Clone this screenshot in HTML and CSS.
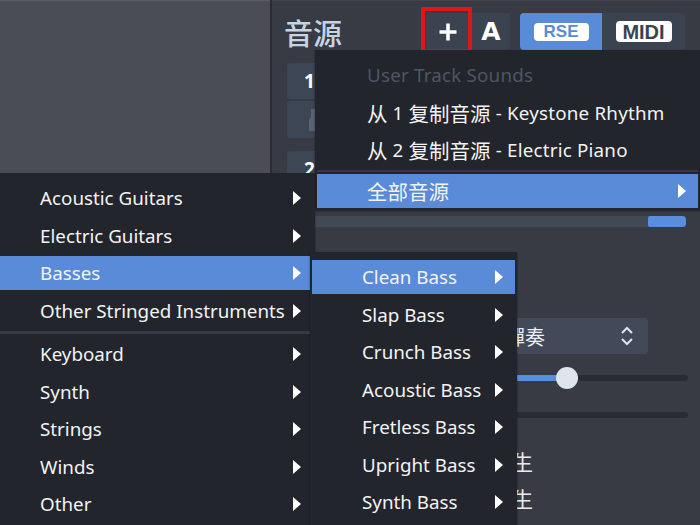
FILE: index.html
```html
<!DOCTYPE html>
<html lang="zh">
<head>
<meta charset="utf-8">
<title>音源</title>
<link rel="stylesheet" href="styles.css">
</head>
<body>
<div class="app">
  <aside class="left-panel"></aside>
  <div class="divider"></div>
  <main class="right-panel">
    <header class="sound-header">
      <h1 class="title">音源</h1>
      <div class="btn-group tools">
        <button class="tool-btn plus-btn" aria-label="add">
          <svg width="20" height="20" viewBox="0 0 20 20"><path d="M10 1.5v17M1.5 10h17" stroke="#fff" stroke-width="3.6" stroke-linecap="butt"/></svg>
        </button>
        <button class="tool-btn a-btn">A</button>
      </div>
      <div class="btn-group modes">
        <button class="mode-btn active"><span class="tag tag-rse">RSE</span></button>
        <button class="mode-btn"><span class="tag tag-midi">MIDI</span></button>
      </div>
    </header>

    <div class="track-card first">
      <div class="card-row"><span class="card-num">1</span></div>
      <div class="card-row lower">
        <svg width="10" height="26" viewBox="0 0 10 26"><path d="M3 2h4v8l2 3v11H1V13l2-3z" fill="#5a6372"/></svg>
      </div>
    </div>
    <div class="track-card second">
      <div class="card-row"><span class="card-num">2</span></div>
    </div>
    <div class="level-bar"><span class="level-fill"></span></div>

    <div class="select-box">
      <span class="select-text">手指彈奏</span>
      <svg class="select-icon" width="14" height="22" viewBox="0 0 14 22"><path d="M2 8l5-5 5 5M2 14l5 5 5-5" fill="none" stroke="#dfe4ea" stroke-width="2"/></svg>
    </div>
    <div class="slider">
      <span class="slider-fill"></span>
      <span class="slider-knob"></span>
    </div>
    <div class="slider plain"></div>
    <div class="text-row">產生</div>
    <div class="text-row second-text">產生</div>
  </main>
</div>

<div class="focus-box"></div>

<div class="menu menu-sounds">
  <div class="menu-item disabled">User Track Sounds</div>
  <div class="menu-item"><span class="cjk">从</span>&nbsp;1&nbsp;<span class="cjk">复制音源</span>&nbsp;- Keystone Rhythm</div>
  <div class="menu-item"><span class="cjk">从</span>&nbsp;2&nbsp;<span class="cjk">复制音源</span>&nbsp;- Electric Piano</div>
  <div class="menu-sep"></div>
  <div class="menu-item active has-sub"><span class="cjk">全部音源</span><i class="arrow"></i></div>
</div>

<div class="menu menu-cats">
  <div class="menu-item has-sub">Acoustic Guitars<i class="arrow"></i></div>
  <div class="menu-item has-sub">Electric Guitars<i class="arrow"></i></div>
  <div class="menu-item has-sub active">Basses<i class="arrow"></i></div>
  <div class="menu-item has-sub">Other Stringed Instruments<i class="arrow"></i></div>
  <div class="menu-sep"></div>
  <div class="menu-item has-sub">Keyboard<i class="arrow"></i></div>
  <div class="menu-item has-sub">Synth<i class="arrow"></i></div>
  <div class="menu-item has-sub">Strings<i class="arrow"></i></div>
  <div class="menu-item has-sub">Winds<i class="arrow"></i></div>
  <div class="menu-item has-sub">Other<i class="arrow"></i></div>
</div>

<div class="menu menu-basses">
  <div class="menu-item has-sub active">Clean Bass<i class="arrow"></i></div>
  <div class="menu-item has-sub">Slap Bass<i class="arrow"></i></div>
  <div class="menu-item has-sub">Crunch Bass<i class="arrow"></i></div>
  <div class="menu-item has-sub">Acoustic Bass<i class="arrow"></i></div>
  <div class="menu-item has-sub">Fretless Bass<i class="arrow"></i></div>
  <div class="menu-item has-sub">Upright Bass<i class="arrow"></i></div>
  <div class="menu-item has-sub">Synth Bass<i class="arrow"></i></div>
</div>
</body>
</html>
```

FILE: styles.css
```css
* { box-sizing: border-box; }

html, body {
  margin: 0;
  padding: 0;
}

body {
  width: 700px;
  height: 525px;
  overflow: hidden;
  position: relative;
  background: #383b43;
  font-family: "Noto Sans", "Noto Sans CJK SC", sans-serif;
  color: #f2f2f2;
}

.app {
  display: grid;
  grid-template-columns: 270px 2px 1fr;
  height: 525px;
}

.left-panel {
  background: #4a4d55;
  border-top: 1px solid #585b63;
}

.divider {
  background: #2a2c31;
}

.right-panel {
  background: #383b43;
  border-top: 1px solid #42454d;
  padding: 0 10px 0 15px;
  display: flex;
  flex-direction: column;
  overflow: hidden;
}

/* header */
.sound-header {
  display: flex;
  align-items: center;
  height: 37px;
  margin-top: 12px;
  margin-right: 5px;
}

.title {
  margin: 0 0 0 -3px;
  padding-top: 2px;
  font-family: "Noto Sans CJK SC", sans-serif;
  font-size: 29px;
  font-weight: 500;
  color: #c6d4e3;
  line-height: 37px;
}

.btn-group {
  display: flex;
  height: 37px;
  border-radius: 4px;
  overflow: hidden;
}

.tools {
  margin-left: auto;
  gap: 2px;
}

.modes {
  margin-left: 10px;
  background: #3b4350;
}

.tool-btn, .mode-btn {
  border: 0;
  margin: 0;
  padding: 0;
  height: 37px;
  display: flex;
  align-items: center;
  justify-content: center;
  background: #3b4350;
  color: #fff;
}

.plus-btn { width: 44px; }

.a-btn {
  width: 38px;
  font-family: "DejaVu Sans", sans-serif;
  font-weight: bold;
  font-size: 25px;
}

.mode-btn { width: 82px; }
.mode-btn + .mode-btn { width: 83px; }
.mode-btn.active { background: #5a8bd8; }

.tag {
  background: #fff;
  border-radius: 4px;
  font-family: "Liberation Sans", sans-serif;
  font-weight: bold;
  display: flex;
  align-items: center;
  justify-content: center;
  line-height: 1;
}

.tag-rse {
  width: 55px;
  height: 18px;
  color: #5a8bd8;
  font-size: 17px;
}

.tag-midi {
  width: 56px;
  height: 21px;
  color: #3b4350;
  font-size: 20px;
}

/* track cards */
.track-card {
  display: flex;
  flex-direction: column;
  gap: 2px;
}

.track-card.first { margin-top: 13px; }
.track-card.second { margin-top: 13px; height: 60px; }

.card-row {
  height: 36px;
  background: #3d4655;
  border-radius: 3px;
  display: flex;
  align-items: center;
  padding-left: 17px;
}

.card-row.lower {
  height: 37px;
  padding-left: 21px;
}

.card-num {
  font-weight: bold;
  font-size: 19px;
  color: #fff;
}

.level-bar {
  margin-top: 5px;
  margin-right: 4px;
  height: 11px;
  background: #414856;
  display: flex;
  justify-content: flex-end;
}

.level-fill {
  width: 38px;
  background: #5b8dde;
  border-radius: 2px 4px 4px 2px;
}

/* controls below */
.select-box {
  margin-top: 91px;
  height: 36px;
  width: 361px;
  background: #424a59;
  border-radius: 4px;
  display: flex;
  align-items: center;
  justify-content: flex-end;
  padding-right: 14px;
}

.select-text {
  font-family: "Noto Sans CJK TC", sans-serif;
  font-size: 20px;
  color: #eef0f3;
  margin-right: 75px;
}

.slider {
  margin-top: 13px;
  height: 22px;
  position: relative;
  display: flex;
  align-items: center;
}

.slider::before {
  content: "";
  flex: 1;
  height: 6px;
  border-radius: 3px;
  background: #292c33;
  margin-right: 2px;
}

.slider-fill {
  position: absolute;
  left: 0;
  width: 280px;
  height: 6px;
  top: 8px;
  background: #5b8dde;
  border-radius: 3px 0 0 3px;
}

.slider-knob {
  position: absolute;
  left: 269px;
  top: 0;
  width: 22px;
  height: 22px;
  border-radius: 50%;
  background: #dfe5ec;
}

.slider.plain { margin-top: 15px; }

.text-row {
  margin-top: 20px;
  height: 30px;
  line-height: 30px;
  padding-left: 204px;
  font-family: "Noto Sans CJK SC", sans-serif;
  font-size: 21px;
  color: #e8eaee;
}

.text-row.second-text { margin-top: 7px; }

/* annotation box */
.focus-box {
  position: absolute;
  left: 421px;
  top: 7px;
  width: 51px;
  height: 46px;
  border: 4px solid #e3141a;
}

/* context menus */
.menu {
  position: absolute;
  background: #22252c;
  display: flex;
  flex-direction: column;
  gap: 3.5px;
  padding: 8px 2px;
  font-size: 18.8px;
  box-shadow: 0 1px 2px rgba(0, 0, 0, 0.45);
}

.menu-item {
  height: 34px;
  display: flex;
  align-items: center;
  padding-left: 50px;
  padding-right: 12px;
  color: #f3f3f3;
  white-space: nowrap;
}

.menu-sounds .menu-item { letter-spacing: 0.2px; }

.cjk {
  font-family: "Noto Sans CJK SC", sans-serif;
  font-size: 20.5px;
  letter-spacing: 0;
}

.menu-item.disabled { color: #4e5563; }
.menu-item.active { background: #5a8bd8; }

.arrow {
  margin-left: auto;
  width: 0;
  height: 0;
  border-left: 8px solid #fff;
  border-top: 7px solid transparent;
  border-bottom: 7px solid transparent;
}

.menu-sep {
  height: 2.5px;
  background: #363941;
}

.menu-sounds {
  left: 315px;
  top: 50px;
  width: 385px;
  padding-bottom: 2px;
}

.menu-sounds .menu-sep { margin: -1px 0 -2px; }

.menu-cats {
  left: -12px;
  top: 173px;
  width: 327px;
  height: 360px;
}

.menu-basses {
  left: 310px;
  top: 252px;
  width: 207px;
  height: 280px;
}
```
